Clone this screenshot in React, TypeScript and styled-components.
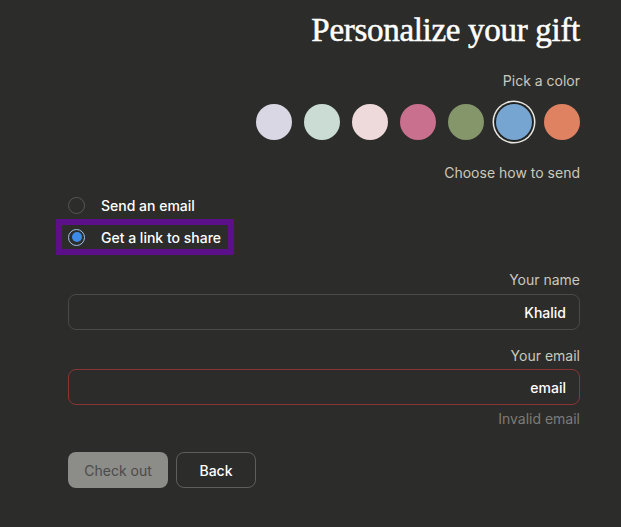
import React, { useState } from "react";
import styled, { createGlobalStyle, css } from "styled-components";

const Global = createGlobalStyle`
  html, body { margin: 0; padding: 0; background: #2c2c2a; }
  body { font-family: Inter, "Liberation Sans", sans-serif; -webkit-font-smoothing: antialiased; }
  * { box-sizing: border-box; }
`;

const Page = styled.div`
  width: 621px;
  height: 527px;
  background: #2c2c2a;
  padding: 10px 41px 0 68px;
`;

const Form = styled.div`
  display: flex;
  flex-direction: column;
  width: 512px;
`;

const Title = styled.h1`
  margin: 0;
  font-family: "Liberation Serif", "DejaVu Serif", serif;
  font-weight: 400;
  font-size: 33px;
  line-height: 40px;
  color: #ffffff;
  text-align: right;
  letter-spacing: -0.3px;
  -webkit-text-stroke: 0.5px #ffffff;
`;

const Label = styled.div<{ $top: number; $bottom: number; $muted?: boolean }>`
  margin-top: ${(p) => p.$top}px;
  margin-bottom: ${(p) => p.$bottom}px;
  font-size: 14px;
  line-height: 20px;
  color: ${(p) => (p.$muted ? "#7c7b76" : "#cbc8bd")};
  text-align: right;
`;

const Swatches = styled.div`
  display: flex;
  justify-content: flex-end;
  gap: 12px;
`;

const Swatch = styled.button<{ $color: string; $selected?: boolean }>`
  width: 36px;
  height: 36px;
  border-radius: 50%;
  border: none;
  padding: 0;
  background: ${(p) => p.$color};
  cursor: pointer;
  ${(p) =>
    p.$selected &&
    css`
      box-shadow: 0 0 0 1px #1e1e1d, 0 0 0 2px #2c2c2a, 0 0 0 3.5px #e8e8e4;
    `}
`;

const RadioGroup = styled.div`
  display: flex;
  flex-direction: column;
  gap: 8px;
  margin-left: -6px;
  margin-top: 10px;
`;

const Option = styled.label<{ $focused?: boolean }>`
  display: flex;
  align-items: center;
  gap: 16px;
  align-self: flex-start;
  height: 24px;
  padding: 0 7px 0 6px;
  font-size: 14px;
  font-weight: 500;
  color: #ffffff;
  cursor: pointer;
  ${(p) =>
    p.$focused &&
    css`
      outline: 6px solid #5b0f89;
      outline-offset: 0;
    `}
`;

const Radio = styled.span<{ $checked?: boolean }>`
  width: 17px;
  height: 17px;
  border-radius: 50%;
  flex: none;
  display: flex;
  align-items: center;
  justify-content: center;
  border: 1.5px solid ${(p) => (p.$checked ? "#9fc4ee" : "#575754")};
  &::after {
    content: "";
    width: 10px;
    height: 10px;
    border-radius: 50%;
    background: ${(p) => (p.$checked ? "#3e8ae8" : "transparent")};
  }
`;

const Input = styled.input<{ $invalid?: boolean }>`
  width: 100%;
  height: 36px;
  border-radius: 8px;
  border: 1px solid ${(p) => (p.$invalid ? "#8a3434" : "#4a4a47")};
  background: transparent;
  color: #ffffff;
  font-family: inherit;
  font-size: 14px;
  font-weight: 500;
  text-align: right;
  padding: 0 13px;
  outline: none;
`;

const Buttons = styled.div`
  display: flex;
  gap: 8px;
  margin-top: 23px;
`;

const Button = styled.button<{ $variant: "disabled" | "outline" }>`
  height: 36px;
  border-radius: 8px;
  font-family: inherit;
  font-size: 14px;
  padding: 0;
  ${(p) =>
    p.$variant === "disabled"
      ? css`
          width: 100px;
          background: #8c8c89;
          color: #4b4b48;
          border: none;
          font-weight: 400;
        `
      : css`
          width: 80px;
          background: transparent;
          color: #ffffff;
          border: 1px solid #5e5e5a;
          font-weight: 500;
        `}
`;

const colors = ["#d9d7e3", "#cadcd3", "#efdadb", "#c8708e", "#85966a", "#76a5d1", "#df8262"];

export default function App() {
  const [selected, setSelected] = useState(5);
  const [mode, setMode] = useState("link");
  return (
    <Page>
      <Global />
      <Form>
        <Title>Personalize your gift</Title>
        <Label $top={21} $bottom={13}>Pick a color</Label>
        <Swatches>
          {colors.map((c, i) => (
            <Swatch key={c} $color={c} $selected={i === selected} onClick={() => setSelected(i)} aria-label={`color ${i + 1}`} />
          ))}
        </Swatches>
        <Label $top={23} $bottom={0}>Choose how to send</Label>
        <RadioGroup>
          <Option onClick={() => setMode("email")}>
            <Radio $checked={mode === "email"} />
            Send an email
          </Option>
          <Option $focused onClick={() => setMode("link")}>
            <Radio $checked={mode === "link"} />
            Get a link to share
          </Option>
        </RadioGroup>
        <Label $top={21} $bottom={4}>Your name</Label>
        <Input defaultValue="Khalid" />
        <Label $top={16} $bottom={3}>Your email</Label>
        <Input $invalid defaultValue="email" />
        <Label $top={4} $bottom={0} $muted>Invalid email</Label>
        <Buttons>
          <Button $variant="disabled" disabled>Check out</Button>
          <Button $variant="outline">Back</Button>
        </Buttons>
      </Form>
    </Page>
  );
}
